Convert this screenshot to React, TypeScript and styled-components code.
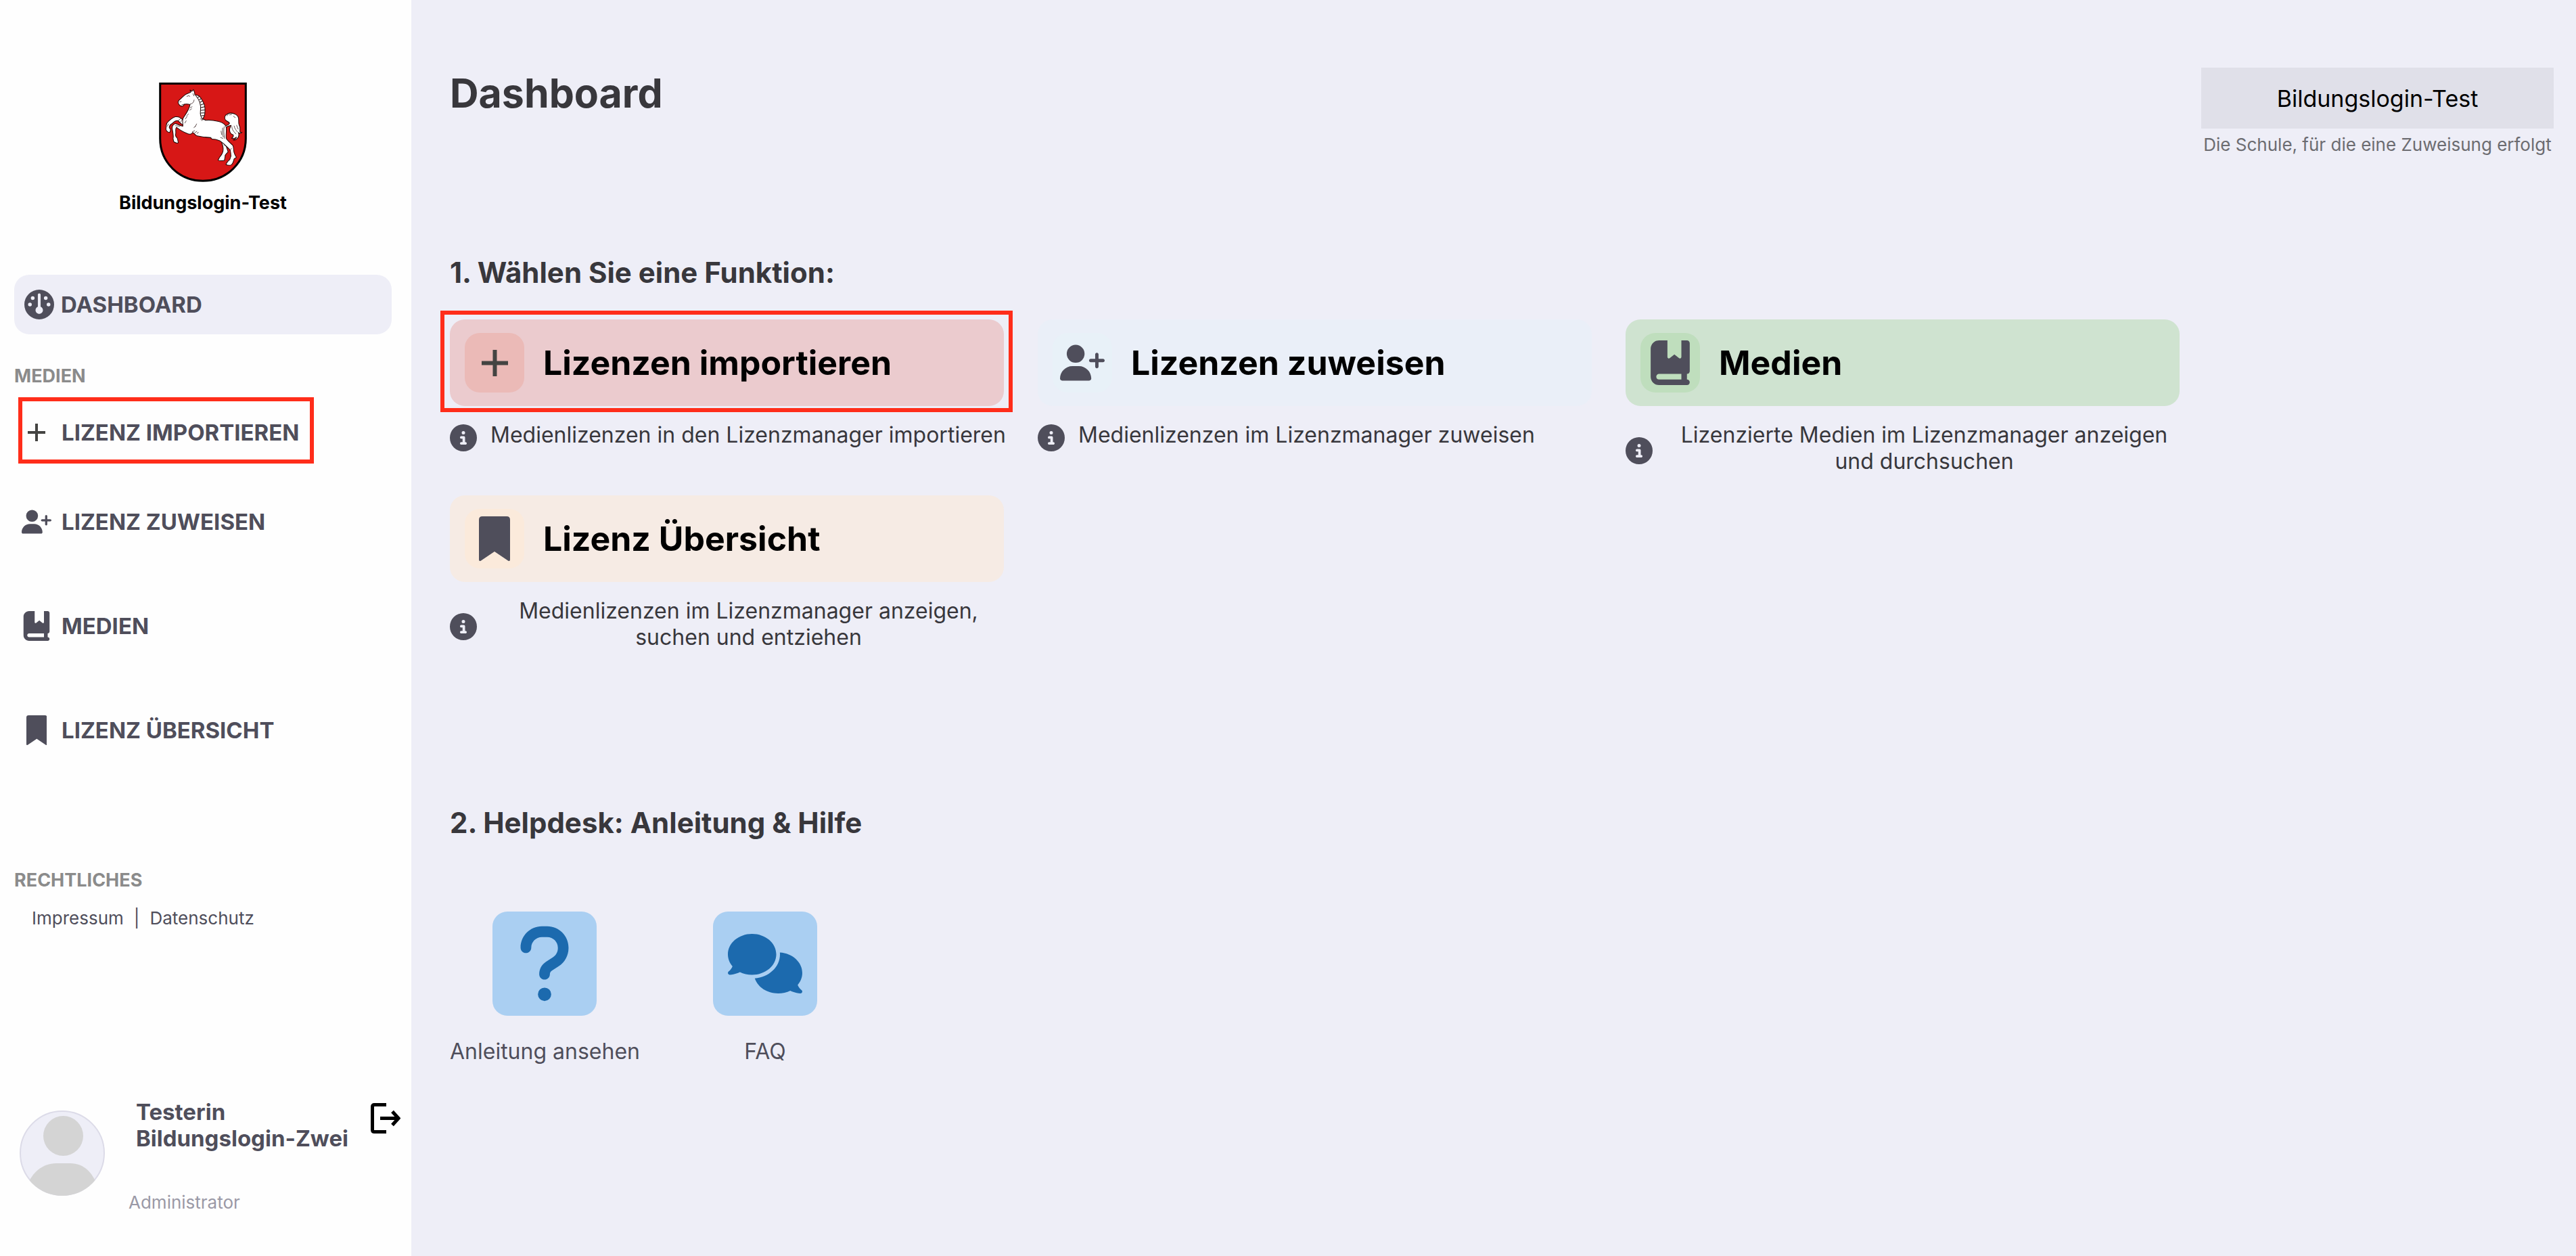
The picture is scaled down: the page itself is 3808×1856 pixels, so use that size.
import React from "react";
import styled, { createGlobalStyle, css } from "styled-components";
import {
  FaBookBookmark,
  FaCircleInfo,
  FaComments,
  FaGauge,
  FaQuestion,
  FaUserPlus,
} from "react-icons/fa6";

const color = {
  page: "#eeeef7",
  ink: "#4f4e5b",
  heading: "#38373c",
  muted: "#8b8b8b",
  marker: "#ff2d1a",
};

const GlobalStyle = createGlobalStyle`
  * { box-sizing: border-box; }
  body {
    margin: 0;
    background: ${color.page};
    color: ${color.ink};
    font-family: Inter, "Liberation Sans", sans-serif;
  }
  h1, h2, p { margin: 0; }
  a { color: inherit; text-decoration: none; }
  button { font: inherit; color: inherit; border: 0; cursor: pointer; }
  svg { display: block; flex: none; }
`;

const Layout = styled.div`
  display: flex;
  min-height: 100vh;
`;

/* ---------- Sidebar ---------- */

const Sidebar = styled.aside`
  display: flex;
  flex: none;
  flex-direction: column;
  width: 608px;
  padding: 122px 29px 63px 21px;
  background: #fefefe;
`;

const Brand = styled.div`
  display: flex;
  flex-direction: column;
  align-items: center;
  gap: 15px;
  margin-bottom: 90px;
  color: #000;
  font-size: 27px;
  font-weight: 700;
  line-height: 32px;
`;

const NavList = styled.nav`
  display: flex;
  flex-direction: column;
  gap: 66px;
`;

const NavItem = styled.a<{ $active?: boolean }>`
  position: relative;
  display: flex;
  align-items: center;
  gap: ${(p) => (p.$active ? 10 : 15)}px;
  height: 88px;
  padding-left: ${(p) => (p.$active ? 15 : 11)}px;
  border-radius: 22px;
  background: ${(p) => (p.$active ? color.page : "transparent")};
  font-size: 33px;
  font-weight: 700;
  line-height: 40px;
  text-transform: uppercase;
`;

const FirstItem = styled.div`
  margin-bottom: -22px;
`;

const NavIcon = styled.span`
  display: flex;
  justify-content: center;
  width: 44px;
`;

const GroupLabel = styled.p<{ $above: number; $below: number }>`
  margin: ${(p) => p.$above}px 0 ${(p) => p.$below}px;
  color: ${color.muted};
  font-size: 27px;
  font-weight: 700;
  line-height: 32px;
  text-transform: uppercase;
`;

const LegalLinks = styled.p`
  display: flex;
  gap: 15px;
  padding-left: 26px;
  font-size: 26px;
  line-height: 32px;
`;

const User = styled.div`
  display: flex;
  align-items: flex-start;
  gap: 35px;
  margin: auto -13px 0 8px;
`;

const AvatarFrame = styled.div`
  padding-top: 17px;
`;

const UserText = styled.div`
  flex: 1;
  min-width: 0;
`;

const UserName = styled.p`
  padding-left: 11px;
  font-size: 33px;
  font-weight: 700;
  line-height: 39px;
  white-space: nowrap;
`;

const UserRole = styled.p`
  margin-top: 59px;
  color: #9a99a6;
  font-size: 26px;
  line-height: 32px;
`;

const LogoutButton = styled.button`
  padding: 6px 0 0;
  background: none;
  color: #000;
`;

/* Frame that points out the element it lies over */
const Marker = styled.span<{ $on: "nav" | "card" }>`
  position: absolute;
  border: 6px solid ${color.marker};
  pointer-events: none;
  ${(p) =>
    p.$on === "nav"
      ? css`
          inset: -8px 115px -2px 6px;
        `
      : css`
          inset: -13px -13px -9px -14px;
        `}
`;

/* ---------- Main ---------- */

const Main = styled.main`
  flex: 1;
  padding: 100px 33px 100px 57px;
`;

const Header = styled.header`
  display: flex;
  align-items: flex-start;
  justify-content: space-between;
  margin-bottom: 148px;
`;

const Title = styled.h1`
  color: ${color.heading};
  font-size: 59px;
  font-weight: 700;
  line-height: 76px;
`;

const School = styled.div`
  min-width: 521px;
  text-align: center;
`;

const SchoolButton = styled.button`
  width: 100%;
  height: 90px;
  background: #e0e0e9;
  color: #000;
  font-size: 34px;
`;

const SchoolNote = styled.p`
  margin-top: 8px;
  color: #6c6c71;
  font-size: 26px;
  line-height: 32px;
`;

const SectionTitle = styled.h2`
  color: ${color.heading};
  font-size: 42px;
  font-weight: 700;
  line-height: 50px;
`;

const CardGrid = styled.div`
  display: grid;
  grid-template-columns: repeat(auto-fill, 819px);
  gap: 23px 50px;
  margin: 44px 0 222px;
`;

const CardButton = styled.button<{ $bg: string }>`
  position: relative;
  display: flex;
  align-items: center;
  gap: 28px;
  width: 100%;
  height: 128px;
  padding: 0 22px;
  border-radius: 22px;
  background: ${(p) => p.$bg};
  color: #000;
  font-size: 50px;
  font-weight: 700;
`;

const CardIcon = styled.span<{ $bg: string }>`
  display: flex;
  flex: none;
  align-items: center;
  justify-content: center;
  width: 88px;
  height: 88px;
  border-radius: 22px;
  background: ${(p) => p.$bg};
  color: ${color.ink};
`;

const Caption = styled.div`
  display: flex;
  align-items: center;
  gap: 20px;
  margin: 23px -4px 0 0;
`;

const CaptionText = styled.p`
  padding-bottom: 8px;
  color: ${color.heading};
  font-size: 32px;
  line-height: 39px;
  text-align: center;
`;

const HelpList = styled.div`
  display: flex;
  gap: 108px;
  margin-top: 106px;
`;

const HelpLink = styled.a`
  display: flex;
  flex-direction: column;
  align-items: center;
  gap: 33px;
  font-size: 32px;
  line-height: 39px;
`;

const HelpTile = styled.span`
  display: flex;
  align-items: center;
  justify-content: center;
  width: 154px;
  height: 154px;
  border-radius: 22px;
  background: #aacff2;
  color: #1c6aae;
`;

/* ---------- Drawings ---------- */

const PlusIcon = ({ size, stroke }: { size: number; stroke: number }) => (
  <svg width={size} height={size} viewBox={`0 0 ${size} ${size}`} aria-hidden="true">
    <path
      d={`M${size / 2} 0V${size}M0 ${size / 2}H${size}`}
      stroke="#444442"
      strokeWidth={stroke}
    />
  </svg>
);

const BookmarkIcon = ({ height }: { height: number }) => (
  <svg height={height} viewBox="0 0 46 66" fill="currentColor" aria-hidden="true">
    <path d="M5 0H41Q46 0 46 5V64Q46 67 43 65.500L23 52L3 65.500Q0 67 0 64V5Q0 0 5 0Z" />
  </svg>
);

const LogoutIcon = () => (
  <svg width="44" height="45" viewBox="0 0 44 45" fill="none" stroke="#000" aria-hidden="true">
    <path d="M23 2.500H5.500Q2.500 2.500 2.500 5.500V39.500Q2.500 42.500 5.500 42.500H23" strokeWidth="5" />
    <path d="M14 22.500H41M32 12.500L41 22.500L32 32.500" strokeWidth="5" />
  </svg>
);

const Avatar = () => (
  <svg width="126" height="126" viewBox="0 0 126 126" aria-hidden="true">
    <clipPath id="avatar-clip">
      <circle cx="63" cy="63" r="63" />
    </clipPath>
    <circle cx="63" cy="63" r="62" fill="#eeeef7" stroke="#dcdbe8" strokeWidth="2" />
    <g fill="#d4d4d4" clipPath="url(#avatar-clip)">
      <circle cx="64.500" cy="37.500" r="29.500" />
      <path d="M12 126V110C18 92 34 78 54 78H75C95 78 108 92 114 110V126Z" />
    </g>
  </svg>
);

const CoatOfArms = () => (
  <svg width="130" height="147" viewBox="226 97 388 440" role="img" aria-label="Niedersachsen">
    <path
      d="M230.500 101.500H609.500V345C609.500 450 525 532 420 532C315 532 230.500 450 230.500 345Z"
      fill="#d71716"
      stroke="#000"
      strokeWidth="9"
    />
    <g fill="#fff" stroke="#1c0505" strokeWidth="3" strokeLinejoin="round" strokeLinecap="round">
      <path d="M512 292C520 287 532 288 537 279C540 271 528 271 520 263C513 254 516 241 528 236C540 230 556 233 565 238C576 245 579 254 578 264C577 275 579 284 583 293C586 302 582 309 584 315C586 319 590 319 593 317C588 324 580 322 577 318C581 329 579 337 572 344C568 350 561 353 554 351C562 349 567 344 568 338C560 346 551 345 547 343C553 340 556 335 554 328C546 326 539 318 538 308C537 298 543 291 545 286C535 287 527 290 518 298Z" />
      <path d="M332 264C324 252 310 247 298 248C284 252 275 262 266 270C259 275 257 281 258 290L256 304C259 312 266 317 273 318L277 306L271 296C271 287 278 281 284 278C292 270 301 264 310 266L324 279L340 290Z" />
      <path d="M500 355C507 371 512 385 509 399C507 411 500 420 494 427L487 440C495 445 506 443 515 441L518 424C517 414 526 410 531 404C529 393 522 382 522 370Z" />
      <path d="M366 140L363 130L371 136L378 128L383 141L384 151C397 151 409 160 416 174C425 188 430 204 429 222C429 236 427 248 419 257L432 264C450 262 472 265 490 269C505 273 518 280 522 292C527 311 519 330 524 346C533 359 545 367 553 376C557 390 554 403 561 415L568 428L558 434C556 444 553 454 546 461C538 464 529 463 522 460C524 451 532 443 539 437L544 422C542 412 545 401 539 394C532 386 520 376 511 367L494 354C484 351 474 346 462 348L453 341C432 340 411 337 394 333C383 327 379 318 374 318C370 327 358 327 350 322C333 316 317 306 303 295C296 300 302 317 299 326C297 335 301 339 307 344L311 363C305 367 297 363 291 359L288 345C291 331 287 316 284 301C283 290 287 282 298 278C308 281 319 287 331 290C332 276 327 262 333 253C344 237 359 217 363 194C355 192 346 192 338 193L330 202C322 202 316 198 313 192C307 184 312 175 319 171C330 162 337 151 348 147Z" />
    </g>
    <g fill="none" stroke="#1c0505" strokeLinecap="round" strokeWidth="3">
      <path d="M388 154C403 172 413 198 409 222C407 238 410 250 420 262" />
      <path d="M398 163L404 158M404 173L412 168M408 184L418 179M411 196L424 191M412 208L427 204M411 220L428 218M411 232L427 231M413 244L425 243" />
      <path d="M349 158L357 155L362 158M317 183L324 181M327 195L337 193M364 192C374 191 380 184 381 174M376 146L380 156" strokeWidth="2" />
      <path d="M364 208L372 204M361 219L370 213M348 244L356 236M342 258L350 247M340 276L346 266M386 292L392 280M380 297L386 290M373 315L383 310M384 319L393 313M394 321L400 318M410 256L415 265" strokeWidth="2" />
      <path d="M514 292C511 306 512 322 516 344M507 298C505 312 507 326 510 338M500 312L503 328M498 340L508 344" strokeWidth="2" />
      <path d="M537 240L547 238M555 246L563 252M548 292C548 306 558 316 566 324M558 289C560 302 568 308 573 316M569 286L576 303M526 244L532 238" strokeWidth="2" />
      <path d="M310 266L320 257M322 270L330 260M299 288L318 290M268 280L262 290M513 372L528 384M546 388L541 396M430 338L456 340" strokeWidth="2" />
    </g>
  </svg>
);

/* ---------- Data ---------- */

const functions = [
  {
    title: "Lizenzen importieren",
    text: "Medienlizenzen in den Lizenzmanager importieren",
    icon: <PlusIcon size={39} stroke={6} />,
    bg: "#ebcbce",
    iconBg: "#ebbab7",
    marked: true,
  },
  {
    title: "Lizenzen zuweisen",
    text: "Medienlizenzen im Lizenzmanager zuweisen",
    icon: <FaUserPlus size={66} />,
    bg: "#eaeff8",
    iconBg: "#e8f1f8",
  },
  {
    title: "Medien",
    text: "Lizenzierte Medien im Lizenzmanager anzeigen und durchsuchen",
    icon: <FaBookBookmark size={66} />,
    bg: "#cfe3d0",
    iconBg: "#bfdebd",
  },
  {
    title: "Lizenz Übersicht",
    text: "Medienlizenzen im Lizenzmanager anzeigen, suchen und entziehen",
    icon: <BookmarkIcon height={66} />,
    bg: "#f6ebe4",
    iconBg: "#fbeadb",
  },
];

export default function App() {
  return (
    <>
      <GlobalStyle />
      <Layout>
        <Sidebar>
          <Brand>
            <CoatOfArms />
            <span>Bildungslogin-Test</span>
          </Brand>

          <NavItem href="#dashboard" $active aria-current="page">
            <NavIcon>
              <FaGauge size={44} />
            </NavIcon>
            Dashboard
          </NavItem>

          <GroupLabel $above={46} $below={23}>
            Medien
          </GroupLabel>
          <NavList>
            <FirstItem>
              <NavItem href="#importieren">
                <NavIcon>
                  <PlusIcon size={26} stroke={4} />
                </NavIcon>
                Lizenz importieren
                <Marker $on="nav" />
              </NavItem>
            </FirstItem>
            <NavItem href="#zuweisen">
              <NavIcon>
                <FaUserPlus size={44} />
              </NavIcon>
              Lizenz zuweisen
            </NavItem>
            <NavItem href="#medien">
              <NavIcon>
                <FaBookBookmark size={44} />
              </NavIcon>
              Medien
            </NavItem>
            <NavItem href="#uebersicht">
              <NavIcon>
                <BookmarkIcon height={44} />
              </NavIcon>
              Lizenz Übersicht
            </NavItem>
          </NavList>

          <GroupLabel $above={162} $below={24}>
            Rechtliches
          </GroupLabel>
          <LegalLinks>
            <a href="#impressum">Impressum</a>
            <span>|</span>
            <a href="#datenschutz">Datenschutz</a>
          </LegalLinks>

          <User>
            <AvatarFrame>
              <Avatar />
            </AvatarFrame>
            <UserText>
              <UserName>
                Testerin
                <br />
                Bildungslogin-Zwei
              </UserName>
              <UserRole>Administrator</UserRole>
            </UserText>
            <LogoutButton type="button" aria-label="Abmelden">
              <LogoutIcon />
            </LogoutButton>
          </User>
        </Sidebar>

        <Main>
          <Header>
            <Title>Dashboard</Title>
            <School>
              <SchoolButton type="button">Bildungslogin-Test</SchoolButton>
              <SchoolNote>Die Schule, für die eine Zuweisung erfolgt</SchoolNote>
            </School>
          </Header>

          <SectionTitle>1. Wählen Sie eine Funktion:</SectionTitle>
          <CardGrid>
            {functions.map((f) => (
              <div key={f.title}>
                <CardButton type="button" $bg={f.bg}>
                  <CardIcon $bg={f.iconBg}>{f.icon}</CardIcon>
                  {f.title}
                  {f.marked && <Marker $on="card" />}
                </CardButton>
                <Caption>
                  <FaCircleInfo size={40} />
                  <CaptionText>{f.text}</CaptionText>
                </Caption>
              </div>
            ))}
          </CardGrid>

          <SectionTitle>2. Helpdesk: Anleitung &amp; Hilfe</SectionTitle>
          <HelpList>
            <HelpLink href="#anleitung">
              <HelpTile>
                <FaQuestion size={126} />
              </HelpTile>
              Anleitung ansehen
            </HelpLink>
            <HelpLink href="#faq">
              <HelpTile>
                <FaComments size={110} />
              </HelpTile>
              FAQ
            </HelpLink>
          </HelpList>
        </Main>
      </Layout>
    </>
  );
}
